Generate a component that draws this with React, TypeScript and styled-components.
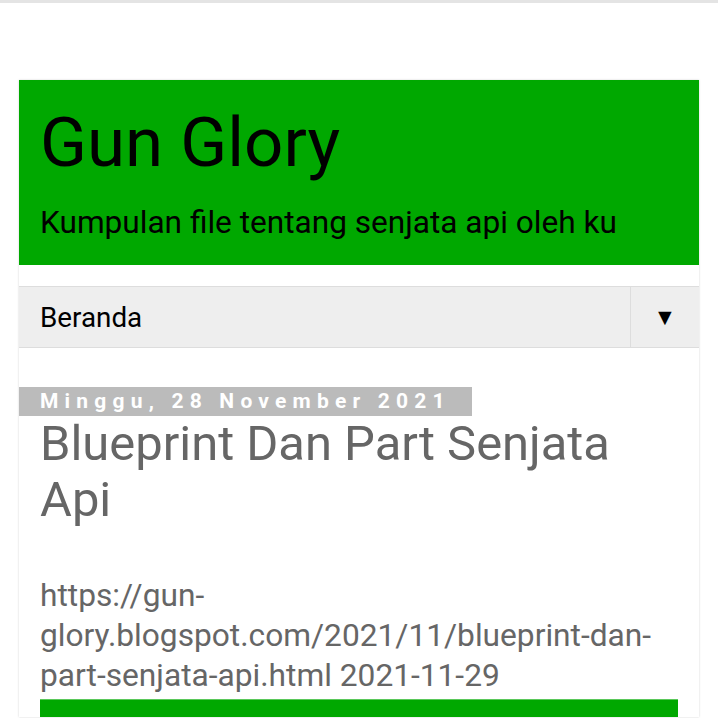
import React from "react";
import styled, { createGlobalStyle } from "styled-components";

const Global = createGlobalStyle`
  html, body { margin: 0; padding: 0; background: #ffffff; }
  body { font-family: Roboto, "Noto Sans", Arial, sans-serif; border-top: 3px solid #e4e4e4; overflow: hidden; height: 718px; box-sizing: border-box; }
`;

const Page = styled.div`
  padding: 77px 19px 0;
`;

const Card = styled.div`
  background: #fff;
  box-shadow: 0 0 2px rgba(0, 0, 0, 0.18);
  display: flex;
  flex-direction: column;
`;

const Header = styled.header`
  background: #00a800;
  height: 185px;
  box-sizing: border-box;
  padding: 23px 21px 0;
`;

const BlogTitle = styled.h1`
  margin: 0;
  font-weight: 400;
  font-size: 69px;
  line-height: 80px;
  color: #000;
`;

const Description = styled.p`
  margin: 22px 0 0;
  font-size: 31.6px;
  line-height: 36px;
  color: #000;
`;

const Nav = styled.nav`
  margin-top: 21px;
  height: 62px;
  box-sizing: border-box;
  background: #eeeeee;
  border-top: 1px solid #dddddd;
  border-bottom: 1px solid #dddddd;
  display: flex;
  align-items: stretch;
`;

const NavItem = styled.div`
  flex: 1;
  display: flex;
  align-items: center;
  padding-left: 21px;
  font-size: 27.8px;
  color: #000;
`;

const NavToggle = styled.div`
  width: 68px;
  border-left: 1px solid #dddddd;
  display: flex;
  align-items: center;
  justify-content: center;
  font-size: 23px;
  color: #000;
`;

const Main = styled.main`
  padding-top: 39px;
  display: flex;
  flex-direction: column;
`;

const DateHeader = styled.h2`
  margin: 0;
  align-self: flex-start;
  background: #bbbbbb;
  color: #fff;
  font-size: 21px;
  font-weight: 700;
  letter-spacing: 6.2px;
  line-height: 29px;
  padding: 0 21px;
`;

const PostBody = styled.div`
  padding: 0 21px;
`;

const PostTitle = styled.h3`
  margin: 0;
  font-weight: 400;
  font-size: 48.9px;
  line-height: 56px;
  color: #666666;
`;

const PostText = styled.p`
  margin: 48px 0 0;
  font-size: 31.7px;
  line-height: 40px;
  color: #666666;
  word-wrap: break-word;
`;

const GreenBlock = styled.div`
  margin-top: 3px;
  height: 17px;
  background: #00a800;
  border-top: 1px solid #5ac85a;
`;

export default function App() {
  return (
    <>
      <Global />
      <Page>
        <Card>
          <Header>
            <BlogTitle>Gun Glory</BlogTitle>
            <Description>Kumpulan file tentang senjata api oleh ku</Description>
          </Header>
          <Nav>
            <NavItem>Beranda</NavItem>
            <NavToggle>▼</NavToggle>
          </Nav>
          <Main>
            <DateHeader>Minggu, 28 November 2021</DateHeader>
            <PostBody>
              <PostTitle>Blueprint Dan Part Senjata Api</PostTitle>
              <PostText>
                https://gun-glory.blogspot.com/2021/11/blueprint-dan-part-senjata-api.html 2021-11-29
              </PostText>
              <GreenBlock />
            </PostBody>
          </Main>
        </Card>
      </Page>
    </>
  );
}
